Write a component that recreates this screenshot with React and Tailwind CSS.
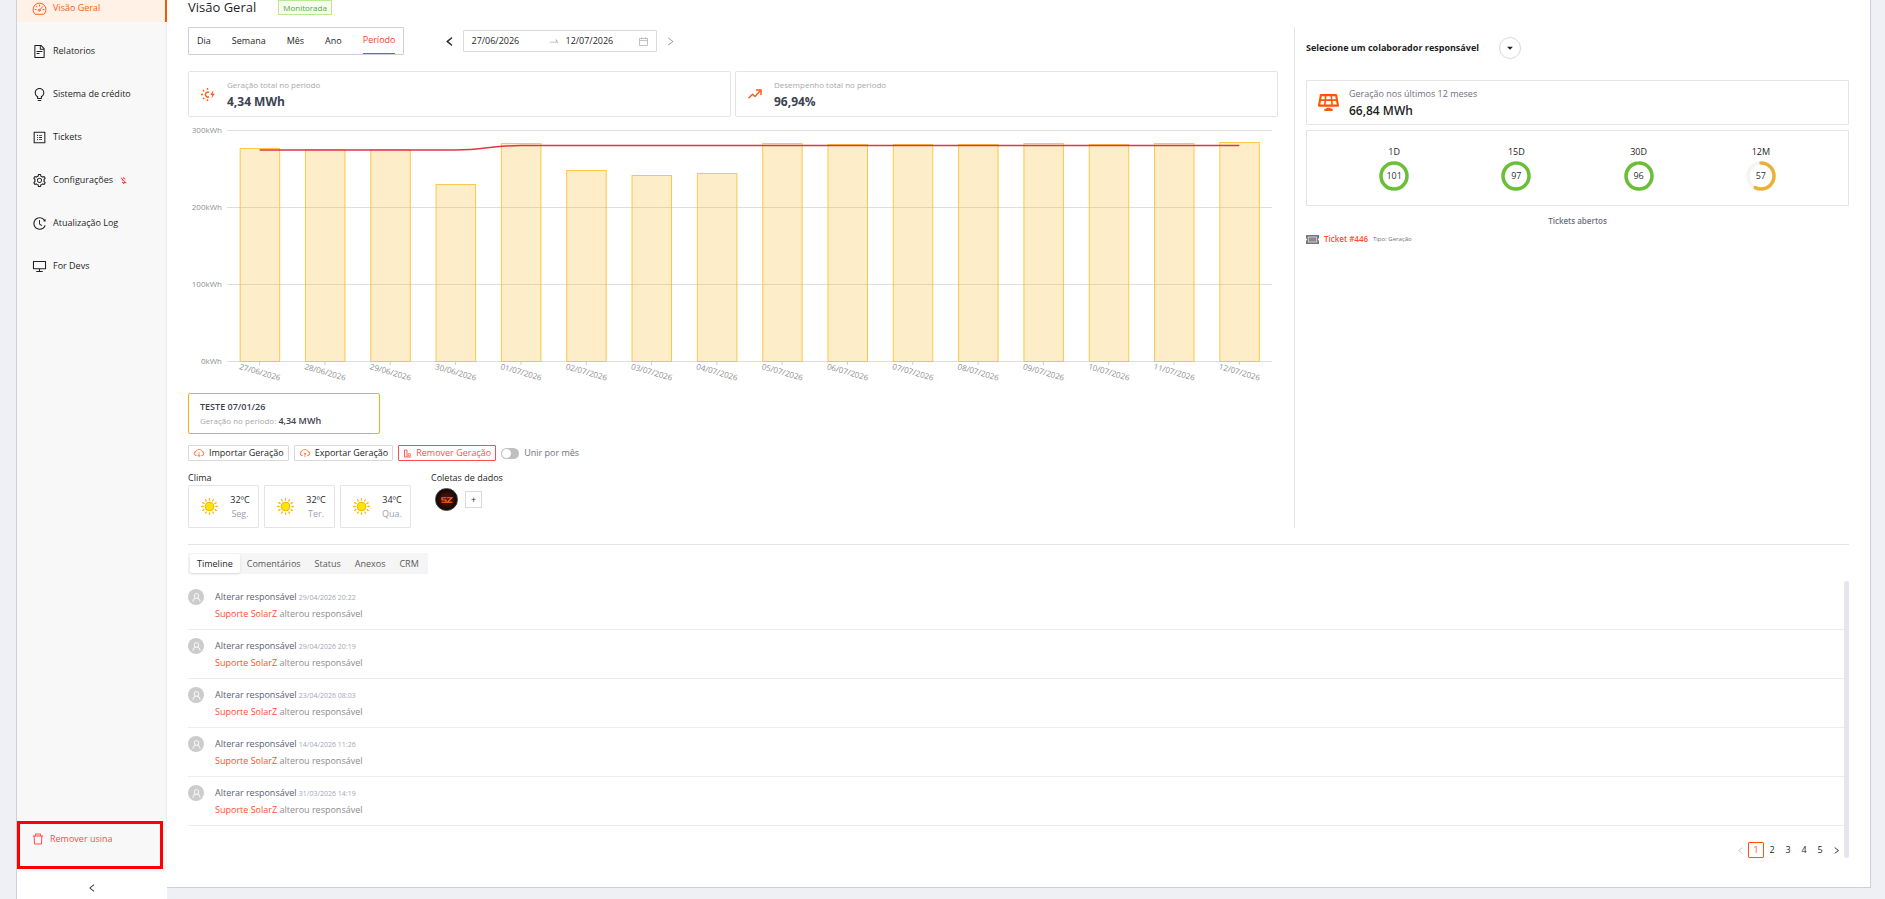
import React, { useState } from "react";
import {
  AiOutlineFileText, AiOutlineBulb, AiOutlineProfile, AiOutlineSetting,
  AiOutlineHistory, AiOutlineDesktop, AiOutlineDelete, AiOutlineLeft, AiOutlineRight,
  AiOutlineCalendar, AiOutlineCloudDownload, AiOutlineCloudUpload, AiOutlineUser, AiOutlineSwapRight,
} from "react-icons/ai";
import { MdOutlineMoneyOff, MdArrowDropDown } from "react-icons/md";
import { FaSolarPanel } from "react-icons/fa";

function GaugeIcon({ className }) {
  return (
    <svg viewBox="0 0 30 30" className={className} fill="none" stroke="currentColor" strokeWidth="1.900" strokeLinecap="round" strokeLinejoin="round">
      <path d="M6 26C3.500 23.500 2.200 20.500 2.200 17a12.800 12.800 0 0 1 25.600 0c0 3.500-1.300 6.500-3.800 9z" />
      <path d="M15 8v2M8.500 10.500l1.400 1.400M6 17h2M22 17h2" />
      <circle cx="14.500" cy="18.500" r="2" />
      <path d="M16 17l5-5.500" />
    </svg>
  );
}

const menu = [
  { label: "Visão Geral", Icon: GaugeIcon, active: true },
  { label: "Relatorios", Icon: AiOutlineFileText },
  { label: "Sistema de crédito", Icon: AiOutlineBulb },
  { label: "Tickets", Icon: AiOutlineProfile },
  { label: "Configurações", Icon: AiOutlineSetting, off: true },
  { label: "Atualização Log", Icon: AiOutlineHistory },
  { label: "For Devs", Icon: AiOutlineDesktop },
];

function Sidebar() {
  return (
    <aside className="flex w-[151px] shrink-0 flex-col border-l border-[#cdd0da] bg-[#f8f8f8]">
      <nav className="-mt-[6px] flex flex-1 flex-col gap-[15px] border-r border-[#ececec]">
        {menu.map(({ label, Icon, active, off }) => (
          <a
            key={label}
            href="#"
            className={
              active
                ? "-mr-px flex h-7 items-center gap-[6px] border-r-2 border-[#ff5500] bg-[#fff1e6] pl-[15px] text-[#ff5a14]"
                : "flex h-7 items-center gap-[6px] pl-[15px] text-[#1f1f1f]"
            }
          >
            <Icon className="size-[15px]" />
            <span>{label}</span>
            {off && <MdOutlineMoneyOff className="size-[9px] text-[#f5222d]" />}
          </a>
        ))}
      </nav>
      <div className="mr-1 mb-[3px] h-12 border-[3px] border-[#ff0000] pt-[5px] pl-[11px]">
        <button className="flex h-5 items-center gap-[5px] text-[#ff4d4f]">
          <AiOutlineDelete className="size-[14px]" />
          Remover usina
        </button>
      </div>
      <button aria-label="Recolher menu" className="flex h-[27px] items-center justify-center bg-white pt-1 text-[#1f1f1f]">
        <AiOutlineLeft className="size-[10px]" />
      </button>
    </aside>
  );
}

function SunBolt() {
  return (
    <svg viewBox="0 0 28 26" className="h-[13px] w-[14px] text-[#ff5a14]" fill="none" stroke="currentColor" strokeWidth="2.800">
      <path d="M16 8.500A5 5 0 1 0 16 17.500" />
      <path d="M13 0v3.500M13 22.500V26M0 13h4M3.800 3.800l2.600 2.600M3.800 22.200l2.600-2.600" />
      <path d="M24.500 5l-6 9h4L21 21l6.500-9.500h-4l1-6.500z" fill="currentColor" stroke="none" />
    </svg>
  );
}

function TrendIcon() {
  return (
    <svg viewBox="0 0 28 20" className="h-[10px] w-[14px] text-[#ff5a14]" fill="none" stroke="currentColor" strokeWidth="3">
      <path d="M1 18.500L9 10.500L14 15L25 3" />
      <path d="M16 2h10v10" />
    </svg>
  );
}

function StatCard({ icon, label, value }) {
  return (
    <div className="flex h-[46px] items-center gap-3 rounded-xs border border-[#e4e4e4] pl-3">
      {icon}
      <div>
        <div className="h-[15px] text-[8px] leading-[14px] text-[#a8a8a8]">{label}</div>
        <div className="text-xs leading-[18px] font-bold text-[#3b4252]">{value}</div>
      </div>
    </div>
  );
}

const tops = [148, 149, 149, 184, 143, 170, 175, 173, 143, 144, 144, 144, 143, 144, 143, 142];
const dates = [
  "27/06/2026", "28/06/2026", "29/06/2026", "30/06/2026", "01/07/2026", "02/07/2026", "03/07/2026", "04/07/2026",
  "05/07/2026", "06/07/2026", "07/07/2026", "08/07/2026", "09/07/2026", "10/07/2026", "11/07/2026", "12/07/2026",
];

function Chart() {
  const step = 1045 / 16;
  const cx = (i) => 39 + step * (i + 0.5);
  return (
    <svg viewBox="0 0 1090 268" className="w-full" fontSize="8">
      {[0, 1, 2, 3].map((i) => (
        <g key={i}>
          <line x1="39" x2="1084" y1={5.5 + i * 77} y2={5.5 + i * 77} stroke="#dedede" />
          <text x="34" y={8 + i * 77} textAnchor="end" fill="#8f8f8f">{300 - i * 100}kWh</text>
        </g>
      ))}
      {tops.map((t, i) => (
        <g key={dates[i]}>
          <rect x={cx(i) - 19.5} y={t - 124.5} width="39.500" height={361 - t} fill="#f5b31a" fillOpacity="0.240" stroke="#fbbf2d" strokeOpacity="0.850" />
          <line x1={cx(i)} x2={cx(i)} y1="237" y2="240" stroke="#ccc" />
          <text x={cx(i) - 21} y="244" fill="#8f8f8f" transform={`rotate(16 ${cx(i) - 21} 244)`}>{dates[i]}</text>
        </g>
      ))}
      <path
        d={`M${cx(0)} 25H${cx(3)}C${cx(3) + 28} 25 ${cx(3) + 36} 20.500 ${cx(4)} 20.500H${cx(15)}`}
        fill="none" stroke="#e03545" strokeWidth="1.500"
      />
    </svg>
  );
}

function Sun() {
  return (
    <svg viewBox="0 0 24 24" className="size-[17px]">
      <g stroke="#ffb300" strokeWidth="1.900" strokeLinecap="round">
        {[0, 30, 60, 90, 120, 150, 180, 210, 240, 270, 300, 330].map((a) => (
          <line key={a} x1="12" y1="1" x2="12" y2="3" transform={`rotate(${a} 12 12)`} />
        ))}
      </g>
      <circle cx="12" cy="12" r="6" fill="#ffe600" stroke="#ffb300" strokeWidth="1.500" />
    </svg>
  );
}

function RemoveIcon() {
  return (
    <svg viewBox="0 0 18 18" className="size-[9px]" fill="none" stroke="currentColor" strokeWidth="1.800">
      <path d="M16 16H3V2h5v14" />
      <circle cx="12.500" cy="11.500" r="2.500" />
    </svg>
  );
}

function SolarZLogo() {
  return (
    <span className="flex size-[23px] items-center justify-center rounded-full border border-[#3a3a3a] bg-[radial-gradient(circle,#6a1608,#120606_70%)]">
      <svg viewBox="0 0 24 12" className="w-3" fill="none" stroke="#ff6a1a" strokeWidth="2.400">
        <path d="M10.500 1.500H2V6h8v4.500H1M12 1.500h10L13 10.500h10" />
      </svg>
    </span>
  );
}

function Ring({ label, value, color }) {
  const c = 2 * Math.PI * 13;
  const part = Math.min(value, 100) / 100;
  return (
    <div className="flex flex-col items-center">
      <div className="h-[15px] leading-[15px] text-[#1f1f1f]">{label}</div>
      <div className="mt-[2px] grid size-[30px] place-items-center text-[#333]">
        <svg viewBox="0 0 30 30" className="col-start-1 row-start-1 size-[30px] -rotate-90" fill="none" strokeWidth="3.500">
          <circle cx="15" cy="15" r="13" stroke="#f5f5f5" />
          <circle cx="15" cy="15" r="13" stroke={color} strokeLinecap="round" strokeDasharray={`${c * part} ${c}`} />
        </svg>
        <span className="col-start-1 row-start-1">{value}</span>
      </div>
    </div>
  );
}

const actionButton = "flex h-4 items-center gap-1 rounded-[1px] border px-1";

const timeline = ["29/04/2026 20:22", "29/04/2026 20:19", "23/04/2026 08:03", "14/04/2026 11:26", "31/03/2026 14:19"];

export default function App() {
  const [join, setJoin] = useState(false);
  return (
    <div className="flex min-h-screen bg-[#eff0f5] pr-[14px] pl-4 font-['Open_Sans',sans-serif] text-[9px] leading-3 text-[#1f1f1f]">
      <Sidebar />
      <main className="mb-[11px] min-w-0 flex-1 border-r border-b border-[#cdd2da] bg-white px-[21px]">
        <div className="flex h-[27px] items-start gap-[22px]">
          <h1 className="h-4 text-[13px] leading-[14px] font-medium">Visão Geral</h1>
          <span className="border border-[#b7eb8f] bg-[#f6ffed] px-1 text-[8px] leading-[13px] text-[#52a93a]">Monitorada</span>
        </div>

        <div className="flex border-b border-[#e4e4e4] pb-4">
          <section className="min-w-0 flex-1 pr-4">
            <div className="flex items-center">
              <div className="flex h-7 items-stretch gap-[21px] rounded-[1px] border border-[#cdd0da] px-2">
                {["Dia", "Semana", "Mês", "Ano"].map((t) => (
                  <button key={t}>{t}</button>
                ))}
                <button className="border-b border-[#f5431f] pb-px text-[#f5431f]">Período</button>
              </div>
              <button aria-label="Anterior" className="ml-10"><AiOutlineLeft className="size-[11px] stroke-[60]" /></button>
              <div className="ml-2 flex h-[22px] w-[194px] items-center rounded-[1px] border border-[#d9d9d9] px-[7px]">
                <input aria-label="Data inicial" defaultValue="27/06/2026" className="w-[77px] outline-none" />
                <AiOutlineSwapRight className="size-3 shrink-0 text-[#b0b0b0]" />
                <input aria-label="Data final" defaultValue="12/07/2026" className="ml-[5px] w-0 flex-1 outline-none" />
                <AiOutlineCalendar className="size-[11px] text-[#b0b0b0]" />
              </div>
              <button aria-label="Próximo" className="ml-2"><AiOutlineRight className="size-[11px] text-[#a0a0a0]" /></button>
            </div>

            <div className="mt-4 grid grid-cols-2 gap-1">
              <StatCard icon={<SunBolt />} label="Geração total no periodo" value="4,34 MWh" />
              <StatCard icon={<TrendIcon />} label="Desempenho total no periodo" value="96,94%" />
            </div>

            <div className="mt-2"><Chart /></div>

            <div className="h-[41px] w-[192px] rounded-xs border border-[#faad14] px-[11px] py-[5px]">
              <div className="h-[15px] leading-[15px] font-semibold text-[#3b4252]">TESTE 07/01/26</div>
              <div className="h-[14px] leading-[14px]">
                <span className="text-[8px] text-[#a8a8a8]">Geração no periodo: </span>
                <span className="font-semibold text-[#3b4252]">4,34 MWh</span>
              </div>
            </div>

            <div className="mt-[11px] flex items-center gap-[5px]">
              <button className={`${actionButton} border-[#d9d9d9]`}>
                <AiOutlineCloudDownload className="size-3 text-[#ff7a45]" />Importar Geração
              </button>
              <button className={`${actionButton} border-[#d9d9d9]`}>
                <AiOutlineCloudUpload className="size-3 text-[#ff7a45]" />Exportar Geração
              </button>
              <button className={`${actionButton} border-[#ff4d4f] text-[#ff4d4f]`}>
                <RemoveIcon />Remover Geração
              </button>
              <label className="flex items-center gap-[5px] text-[#6b7280]">
                <input
                  type="checkbox"
                  role="switch"
                  checked={join}
                  onChange={() => setJoin(!join)}
                  className="h-[11px] w-[18px] appearance-none rounded-full bg-[#bfbfbf] p-px before:block before:size-[9px] before:rounded-full before:bg-white checked:bg-[#ff5500] checked:before:ml-auto"
                />
                Unir por mês
              </label>
            </div>

            <div className="mt-[10px] flex gap-5">
              <div>
                <h2 className="h-[14px] leading-[14px] font-medium">Clima</h2>
                <div className="flex gap-[5px]">
                  {[["32ºC", "Seg."], ["32ºC", "Ter."], ["34ºC", "Qua."]].map(([t, d]) => (
                    <div key={d} className="flex h-[43px] w-[71px] items-center gap-2 rounded-[1px] border border-[#e4e4e4] pl-3">
                      <Sun />
                      <div className="flex-1 pr-1 text-center leading-[14px]">
                        <div>{t}</div>
                        <div className="text-[#9ca3af]">{d}</div>
                      </div>
                    </div>
                  ))}
                </div>
              </div>
              <div>
                <h2 className="h-[14px] leading-[14px] font-medium">Coletas de dados</h2>
                <div className="mt-[3px] flex items-center gap-[7px] pl-1">
                  <SolarZLogo />
                  <button aria-label="Adicionar" className="size-[17px] border border-[#d9d9d9] leading-none">+</button>
                </div>
              </div>
            </div>
          </section>

          <aside className="w-[555px] shrink-0 border-l border-[#e4e4e4] pl-[11px]">
            <div className="mt-[10px] flex items-center gap-5">
              <span className="font-bold">Selecione um colaborador responsável</span>
              <button aria-label="Selecionar colaborador" className="flex size-[22px] items-center justify-center rounded-full border border-[#d9d9d9]">
                <MdArrowDropDown className="size-[14px]" />
              </button>
            </div>
            <div className="mt-[21px] flex h-[45px] items-center gap-[10px] rounded-[1px] border border-[#e4e4e4] pl-[11px]">
              <FaSolarPanel className="size-[21px] text-[#ff5500]" />
              <div>
                <div className="h-4 leading-[14px] text-[#6b7280]">Geração nos últimos 12 meses</div>
                <div className="text-xs leading-4 font-semibold">66,84 MWh</div>
              </div>
            </div>
            <div className="mt-[5px] grid h-[76px] grid-cols-4 rounded-[1px] border border-[#e4e4e4] px-[26px] pt-[13px]">
              <Ring label="1D" value={101} color="#6abf36" />
              <Ring label="15D" value={97} color="#6abf36" />
              <Ring label="30D" value={96} color="#6abf36" />
              <Ring label="12M" value={57} color="#ebb134" />
            </div>
            <h2 className="mt-[9px] text-center text-[8px] font-semibold text-[#6b7280]">Tickets abertos</h2>
            <div className="mt-[6px] flex items-center gap-[5px]">
              <svg viewBox="0 0 26 18" className="h-[9px] w-[13px]">
                <path d="M0 0h26v7a2 2 0 0 0 0 4v7H0v-7a2 2 0 0 0 0-4z" fill="#777" />
                <rect x="4.500" y="4" width="17" height="10" fill="#8a8a8a" stroke="#e5e5e5" strokeWidth="1.500" />
              </svg>
              <a href="#" className="text-[8px] font-semibold text-[#ff4d2e]">Ticket #446</a>
              <span className="text-[6px] text-[#6b7280]">Tipo: Geração</span>
            </div>
          </aside>
        </div>

        <div className="mt-2 flex h-[21px] w-fit items-center bg-[#f5f5f5] px-[2px] text-[#595959]">
          <button className="h-[19px] rounded-xs bg-white px-[7px] text-[#1f1f1f] shadow-sm">Timeline</button>
          {["Comentários", "Status", "Anexos", "CRM"].map((t) => (
            <button key={t} className="px-[7px]">{t}</button>
          ))}
        </div>

        <div className="mt-[7px] flex">
          <div className="min-w-0 flex-1">
            {timeline.map((when) => (
              <article key={when} className="flex h-[49px] gap-[11px] border-b border-[#ececec] pt-2">
                <span className="flex size-4 items-center justify-center rounded-full bg-[#ccc] text-white">
                  <AiOutlineUser className="size-[11px]" />
                </span>
                <div className="leading-4">
                  <div className="h-[17px] text-[#5a6072]">Alterar responsável <time className="text-[7px] text-[#a3a7b3]">{when}</time></div>
                  <div className="h-[17px] text-[#8c8c8c]"><a href="#" className="text-[#ff4d2e]">Suporte SolarZ</a> alterou responsável</div>
                </div>
              </article>
            ))}
            <nav aria-label="Paginação" className="mt-4 flex justify-end">
              <button aria-label="Página anterior" className="flex size-4 items-center justify-center text-[#bfbfbf]"><AiOutlineLeft className="size-[9px]" /></button>
              <button className="size-4 rounded-[1px] border border-[#ff5500] text-[#ff5500]">1</button>
              {[2, 3, 4, 5].map((n) => (
                <button key={n} className="size-4">{n}</button>
              ))}
              <button aria-label="Próxima página" className="flex size-4 items-center justify-center"><AiOutlineRight className="size-[9px]" /></button>
            </nav>
          </div>
          <div className="w-[5px] rounded-full bg-[#e5e6ea]" />
        </div>
      </main>
    </div>
  );
}
